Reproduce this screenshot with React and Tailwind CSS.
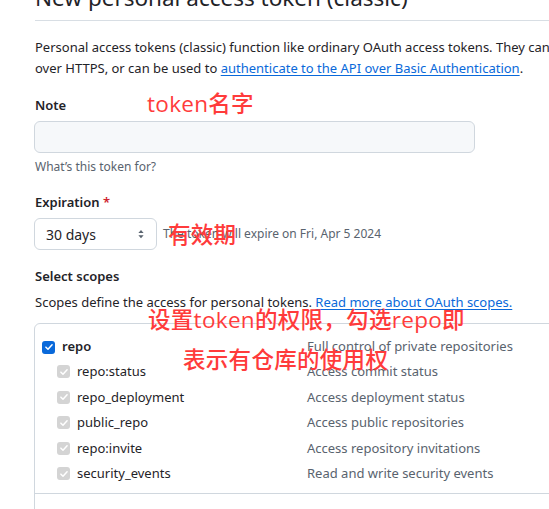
import React from 'react';

const Check = ({ disabled = false, checked = true }) => {
  if (!checked) {
    return <span className="block w-[13px] h-[13px] rounded-[3px] border border-[#6e7781] bg-white shrink-0" />;
  }
  return (
    <span
      className={`flex items-center justify-center w-[13px] h-[13px] rounded-[3px] shrink-0 ${
        disabled ? 'bg-[#d4d4d4]' : 'bg-[#0969da]'
      }`}
    >
      <svg viewBox="0 0 12 12" className="w-[10px] h-[10px]" fill="none">
        <path d="M2.3 6.2 4.8 8.6 9.7 3.4" stroke="white" strokeWidth="1.8" strokeLinecap="round" strokeLinejoin="round" />
      </svg>
    </span>
  );
};

const subScopes = [
  ['repo:status', 'Access commit status'],
  ['repo_deployment', 'Access deployment status'],
  ['public_repo', 'Access public repositories'],
  ['repo:invite', 'Access repository invitations'],
  ['security_events', 'Read and write security events'],
];

// red annotation text drawn over the screenshot
const Note = ({ className, children }) => (
  <div
    className={`absolute text-[22.5px] leading-none font-medium tracking-[0.3px] text-[#ff3b3b] whitespace-nowrap ${className}`}
    style={{ fontFamily: '"Open Sans", "Noto Sans CJK SC", sans-serif' }}
  >
    {children}
  </div>
);

export default function App() {
  return (
    <div
      className="relative w-[549px] h-[509px] overflow-hidden bg-white text-[#1f2328]"
      style={{ fontFamily: '"Noto Sans", "Noto Sans CJK SC", sans-serif' }}
    >
      <div className="w-[760px] pl-[35px]">
        <h1 className="-mt-[17px] text-[22.5px] leading-[30px] font-normal pb-[7px] border-b border-[#d8dee4]">
          New personal access token (classic)
        </h1>

        <p className="mt-[16px] text-[13px] leading-[21px] whitespace-nowrap">
          Personal access tokens (classic) function like ordinary OAuth access tokens. They can be used instead of a password for Git
          <br />
          over HTTPS, or can be used to{' '}
          <a className="text-[#0969da] underline underline-offset-2">authenticate to the API over Basic Authentication</a>.
        </p>

        <div className="mt-[16px] text-[13px] leading-[21px] font-semibold">Note</div>
        <div className="mt-[5px] w-[441px] h-[32px] -ml-px rounded-[6px] border border-[#d0d7de] bg-[#f6f8fa]" />
        <div className="mt-[5px] text-[12px] leading-[18px] text-[#59636e]">What’s this token for?</div>

        <div className="mt-[16px] text-[13px] leading-[21px] font-semibold">
          Expiration <span className="text-[#cf222e]">*</span>
        </div>
        <div className="mt-[5px] flex items-center gap-[6px]">
          <div className="-ml-px w-[123px] h-[32px] rounded-[6px] border border-[#d0d7de] bg-white flex items-center justify-between pl-[11px] pr-[9px] text-[14px]">
            <span>30 days</span>
            <svg viewBox="0 0 16 16" className="w-[12px] h-[14px] text-[#59636e]" fill="currentColor">
              <path d="M4.5 6.5 8 2.5l3.5 4z M4.5 9.5 8 13.5l3.5-4z" />
            </svg>
          </div>
          <span className="text-[12px] text-[#59636e]">The token will expire on Fri, Apr 5 2024</span>
        </div>

        <div className="mt-[16px] text-[13px] leading-[21px] font-semibold">Select scopes</div>
        <p className="mt-[5px] text-[13px] leading-[21px] whitespace-nowrap">
          Scopes define the access for personal tokens.{' '}
          <a className="text-[#0969da] underline underline-offset-2">Read more about OAuth scopes.</a>
        </p>

        <div className="mt-[10px] -ml-px rounded-[6px] border border-[#d0d7de] text-[13px]">
          <div className="pt-[11px] pb-[6px] border-b border-[#d0d7de]">
            <div className="flex items-center h-[24px]">
              <div className="w-[272px] flex items-center pl-[7px] gap-[7px] font-semibold">
                <Check />
                <span>repo</span>
              </div>
              <span className="text-[#59636e]">Full control of private repositories</span>
            </div>
            {subScopes.map(([name, desc]) => (
              <div key={name} className="flex items-center h-[25.5px]">
                <div className="w-[272px] flex items-center pl-[22px] gap-[7px]">
                  <Check disabled />
                  <span>{name}</span>
                </div>
                <span className="text-[#59636e]">{desc}</span>
              </div>
            ))}
          </div>
          <div className="pt-[11px] pb-[10px]">
            <div className="flex items-center h-[23px]">
              <div className="w-[272px] flex items-center pl-[9px] gap-[7px] font-semibold">
                <Check checked={false} />
                <span>workflow</span>
              </div>
              <span className="text-[#59636e]">Update GitHub Action workflows</span>
            </div>
          </div>
        </div>
      </div>

      <Note className="left-[147px] top-[93px]">token名字</Note>
      <Note className="left-[168px] top-[224px]">有效期</Note>
      <Note className="left-[148px] top-[309px]">设置token的权限，勾选repo即</Note>
      <Note className="left-[183px] top-[349px]">表示有仓库的使用权</Note>
    </div>
  );
}
